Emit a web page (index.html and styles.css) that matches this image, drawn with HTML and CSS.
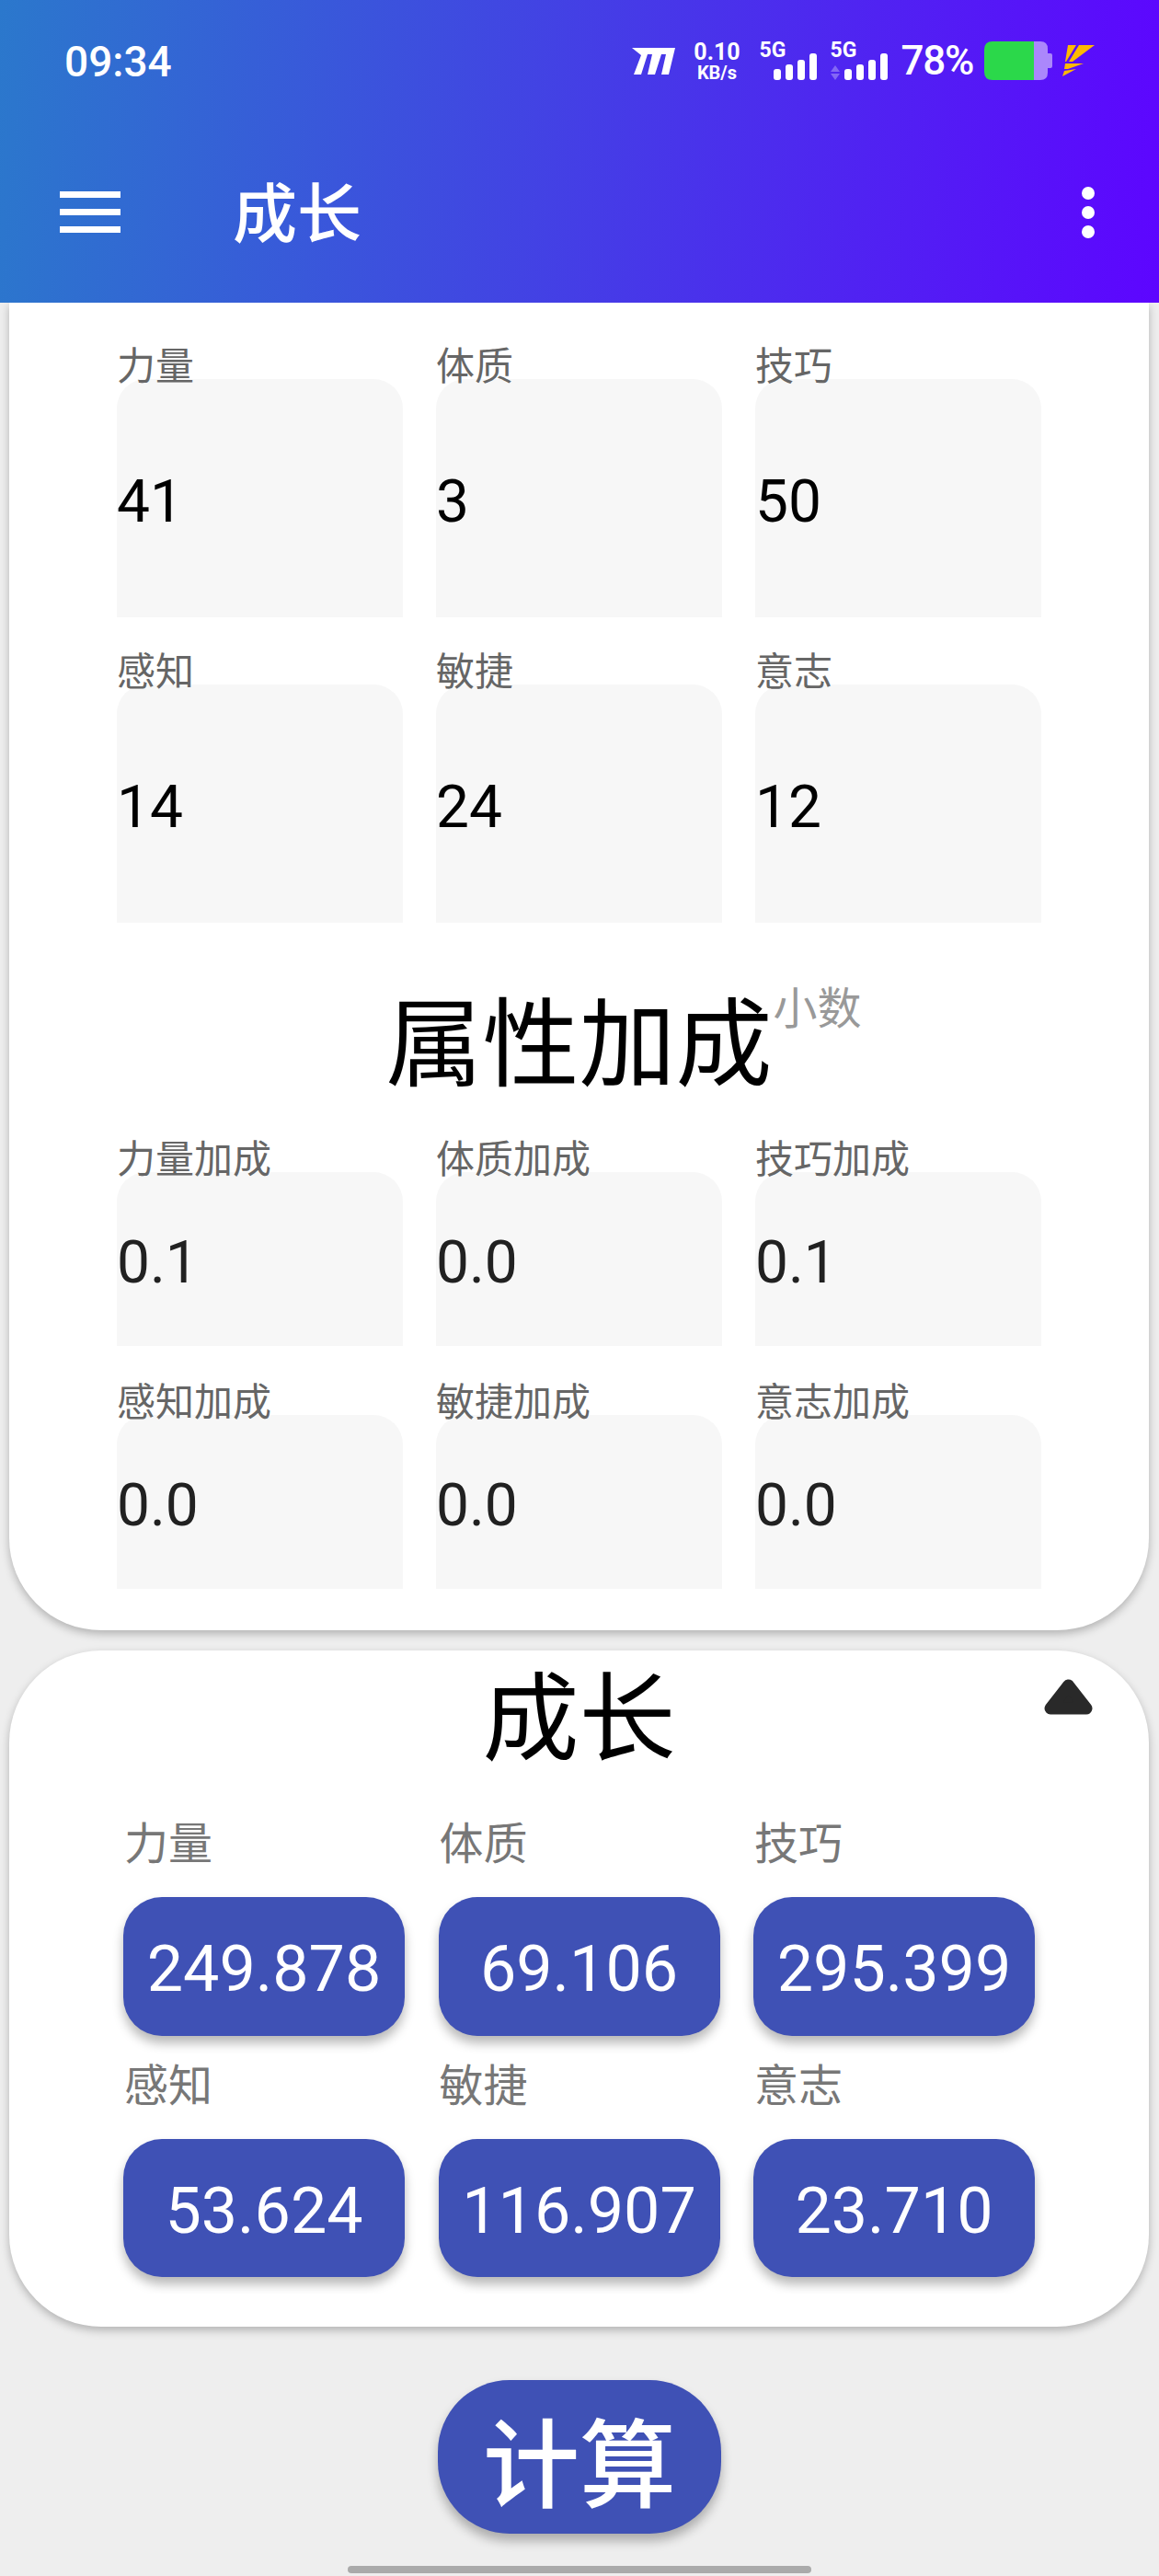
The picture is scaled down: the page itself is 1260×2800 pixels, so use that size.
FILE: index.html
```html
<!DOCTYPE html>
<html lang="zh-CN">
<head>
    <meta charset="UTF-8">
    <meta name="viewport" content="width=device-width, initial-scale=1.0">
    <link rel="stylesheet" href="styles.css">
    <title>成长</title>
</head>
<body>
    <header class="appbar">
        <div class="statusbar">
            <span class="time">09:34</span>
            <div class="status-icons">
                <svg class="logo" width="49" height="29" viewBox="0 0 49 29">
                    <path fill="#fff" d="M1 0H48L41 29H33L38 7H33L26 29H18L23 7H18L11 29H3L11 8Z"/>
                </svg>
                <div class="speed">
                    <span class="speed-num">0.10</span>
                    <span class="speed-unit">KB/s</span>
                </div>
                <div class="signal">
                    <span class="net">5G</span>
                    <svg width="64" height="42" viewBox="0 0 64 42">
                        <rect x="16" y="30" width="8" height="12" rx="3" fill="#fff"/>
                        <rect x="29" y="25" width="8" height="17" rx="3" fill="#fff"/>
                        <rect x="42" y="20" width="8" height="22" rx="3" fill="#fff"/>
                        <rect x="55" y="13" width="8" height="29" rx="3" fill="#fff"/>
                    </svg>
                </div>
                <div class="signal">
                    <span class="net">5G</span>
                    <svg width="64" height="42" viewBox="0 0 64 42">
                        <path d="M6 26L11 33H1Z M1 35H11L6 42Z" fill="#fff" fill-opacity=".3"/>
                        <rect x="16" y="30" width="8" height="12" rx="3" fill="#fff"/>
                        <rect x="29" y="25" width="8" height="17" rx="3" fill="#fff"/>
                        <rect x="42" y="20" width="8" height="22" rx="3" fill="#fff"/>
                        <rect x="55" y="13" width="8" height="29" rx="3" fill="#fff"/>
                    </svg>
                </div>
                <span class="percent">78%</span>
                <svg class="battery" width="74" height="42" viewBox="0 0 74 42">
                    <path fill="#ab87fb" d="M54 0H61Q69 0 69 8V13H72Q74 13 74 15V27Q74 29 72 29H69V34Q69 42 61 42H54Z"/>
                    <path fill="#2bd84a" d="M9 0H54V42H9Q0 42 0 33V9Q0 0 9 0Z"/>
                </svg>
                <svg class="bolt" width="35" height="34" viewBox="0 0 35 34">
                    <path fill="#ffb900" d="M6 0H15L4 18H3ZM18 0H35L11 18H7Z"/>
                    <path fill="#ffb900" d="M3 20H23L6 26H2ZM2 28L15 26L0 34Z"/>
                </svg>
            </div>
        </div>
        <div class="toolbar">
            <div class="menu-btn"><i></i><i></i><i></i></div>
            <h1 class="page-title">成长</h1>
            <div class="more-btn"><i></i><i></i><i></i></div>
        </div>
    </header>

    <section class="card card-top">
        <div class="field-grid">
            <div class="field field-big"><label>力量</label><div class="box">41</div></div>
            <div class="field field-big"><label>体质</label><div class="box">3</div></div>
            <div class="field field-big"><label>技巧</label><div class="box">50</div></div>
            <div class="field field-big"><label>感知</label><div class="box">14</div></div>
            <div class="field field-big"><label>敏捷</label><div class="box">24</div></div>
            <div class="field field-big"><label>意志</label><div class="box">12</div></div>
        </div>

        <div class="title-row">
            <h2 class="card-title">属性加成<span class="hint">小数</span></h2>
        </div>

        <div class="field-grid field-grid-small">
            <div class="field field-small"><label>力量加成</label><div class="box">0.1</div></div>
            <div class="field field-small"><label>体质加成</label><div class="box">0.0</div></div>
            <div class="field field-small"><label>技巧加成</label><div class="box">0.1</div></div>
            <div class="field field-small"><label>感知加成</label><div class="box">0.0</div></div>
            <div class="field field-small"><label>敏捷加成</label><div class="box">0.0</div></div>
            <div class="field field-small"><label>意志加成</label><div class="box">0.0</div></div>
        </div>
    </section>

    <section class="card card-growth">
        <h2 class="card-title growth-title">成长</h2>
        <svg class="collapse" width="53" height="39" viewBox="0 0 53 39">
            <path d="M26.500 7L46 32H7Z" fill="#292929" stroke="#292929" stroke-width="13" stroke-linejoin="round"/>
        </svg>
        <div class="result-grid">
            <div class="result"><label>力量</label><button>249.878</button></div>
            <div class="result"><label>体质</label><button>69.106</button></div>
            <div class="result"><label>技巧</label><button>295.399</button></div>
            <div class="result"><label>感知</label><button>53.624</button></div>
            <div class="result"><label>敏捷</label><button>116.907</button></div>
            <div class="result"><label>意志</label><button>23.710</button></div>
        </div>
    </section>

    <div class="actions">
        <button class="calc">计算</button>
    </div>
    <div class="home-bar"></div>
</body>
</html>
```

FILE: styles.css
```css
html, body {
    background: #eeeeee;
}

body {
    margin: 0;
    font-family: Roboto, "Noto Sans CJK SC", sans-serif;
}

/* barra de cima */
.appbar {
    position: relative;
    z-index: 2;
    height: 329px;
    background: linear-gradient(95deg, #2b78cc 0%, #5d05ff 100%);
    color: white;
}

.statusbar {
    display: flex;
    align-items: center;
    justify-content: space-between;
    height: 132px;
    padding: 0 70px 0 70px;
}

.time {
    margin-top: 2px;
    font-size: 46px;
    font-weight: 500;
}

.status-icons {
    display: flex;
    align-items: center;
}

.speed {
    display: flex;
    flex-direction: column;
    align-items: center;
    width: 48px;
    margin-left: 20px;
    font-weight: 700;
    white-space: nowrap;
}

.speed-num {
    font-size: 25px;
    line-height: 25px;
}

.speed-unit {
    font-size: 20px;
    line-height: 20px;
}

.signal {
    position: relative;
    width: 64px;
    height: 42px;
    margin-left: 13px;
}

.speed + .signal {
    margin-left: 22px;
}

.net {
    position: absolute;
    top: -2px;
    left: 0;
    font-size: 23px;
    line-height: 23px;
    font-weight: 700;
}

.percent {
    margin-left: 13px;
    font-size: 44px;
    font-weight: 500;
    line-height: 42px;
    letter-spacing: -1.300px;
}

.battery {
    margin-left: 12px;
}

.bolt {
    margin-left: 11px;
}

.toolbar {
    display: flex;
    align-items: center;
    height: 197px;
    padding: 0 70px 0 65px;
}

.menu-btn {
    display: flex;
    flex-direction: column;
    gap: 12px;
    width: 66px;
}

.menu-btn i {
    height: 7px;
    background: white;
}

.page-title {
    flex: 1;
    margin: 0 0 6px 122px;
    font-size: 70px;
    font-weight: 500;
}

.more-btn {
    display: flex;
    flex-direction: column;
    gap: 7px;
}

.more-btn i {
    width: 14px;
    height: 14px;
    border-radius: 50%;
    background: white;
}

/* cards */
.card {
    position: relative;
    margin: 0 11px 0 10px;
    background: white;
    box-shadow: 0 4px 10px rgba(0, 0, 0, .25);
}

.card-top {
    height: 1443px;
    padding-top: 43px;
    box-sizing: border-box;
    border-radius: 0 0 100px 100px;
}

.card-growth {
    margin-top: 22px;
    padding-top: 11px;
    padding-bottom: 36px;
    border-radius: 100px;
}

.field-grid {
    display: grid;
    grid-template-columns: repeat(3, 311px);
    column-gap: 36px;
    row-gap: 33px;
    padding-left: 117px;
}

.field-grid-small {
    row-gap: 35px;
}

.field label, .result label {
    display: block;
    position: relative;
    z-index: 1;
    font-size: 42px;
    line-height: 50px;
    color: #666666;
}

.field label {
    padding-top: 2px;
}

.box {
    display: flex;
    align-items: center;
    box-sizing: border-box;
    margin-top: -12px;
    padding-top: 7px;
    background: #f7f7f7;
    border-radius: 32px 32px 0 0;
    font-size: 64px;
}

.field-big .box {
    height: 259px;
    color: black;
}

.field-small .box {
    height: 189px;
    color: #212121;
}

.title-row {
    height: 231px;
    text-align: center;
}

.card-title {
    margin: 0;
    font-size: 105px;
    font-weight: 400;
    color: black;
}

.title-row .card-title {
    position: relative;
    display: inline-block;
    margin-top: 69px;
    line-height: 130px;
}

.hint {
    position: absolute;
    top: -3px;
    left: 100%;
    margin-left: 1px;
    font-size: 48px;
    line-height: 56px;
    color: #999999;
    white-space: nowrap;
}

.growth-title {
    line-height: 130px;
    text-align: center;
}

.collapse {
    position: absolute;
    top: 31px;
    right: 61px;
}

.result-grid {
    display: grid;
    grid-template-columns: repeat(3, 306px);
    column-gap: 36.500px;
    row-gap: 27px;
    margin: 42px 0 0;
    padding: 0 0 18px 124px;
    overflow: hidden;
}

.result label {
    padding-left: 1px;
    font-size: 48px;
    line-height: 56px;
    color: #777777;
}

.result button {
    display: block;
    width: 306px;
    height: 150.500px;
    margin-top: 29px;
    padding-top: 7px;
    border: none;
    border-radius: 42px;
    background: #3f51b5;
    color: white;
    font-family: inherit;
    font-size: 70px;
    box-shadow: 0 8px 12px rgba(0, 0, 0, .28);
}

.actions {
    display: flex;
    justify-content: center;
    margin-top: 58px;
}

.calc {
    width: 308px;
    height: 167px;
    padding: 0;
    border: none;
    border-radius: 78px;
    background: #3f51b5;
    color: white;
    font-family: inherit;
    font-size: 105px;
    font-weight: 500;
    box-shadow: 0 8px 12px rgba(0, 0, 0, .28);
}

.home-bar {
    width: 504px;
    height: 8px;
    margin: 35px auto 0;
    border-radius: 4px;
    background: #aaaaaa;
}
```
